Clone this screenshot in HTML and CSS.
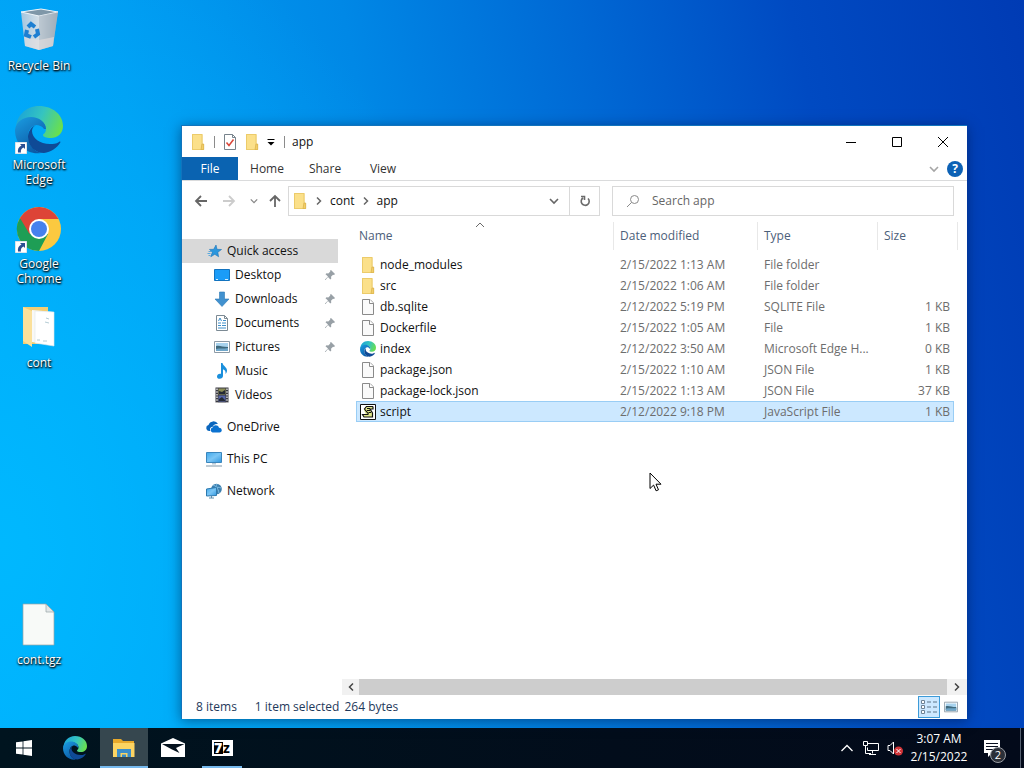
FILE: index.html
```html
<!DOCTYPE html>
<html lang="en">
<head>
    <meta charset="UTF-8">
    <meta name="viewport" content="width=device-width, initial-scale=1.0">
    <title>app</title>
    <link rel="stylesheet" href="styles.css">
</head>
<body>
    <!-- shared icons -->
    <svg class="defs" aria-hidden="true">
        <defs>
            <linearGradient id="edgeTop" x1="0" y1="0.3" x2="1" y2="0.6">
                <stop offset="0" stop-color="#1aa3d8"/>
                <stop offset="0.5" stop-color="#35c4c0"/>
                <stop offset="1" stop-color="#6be04b"/>
            </linearGradient>
            <linearGradient id="edgeLeft" x1="0" y1="0" x2="0.6" y2="1">
                <stop offset="0" stop-color="#1b9de2"/>
                <stop offset="1" stop-color="#0c59a4"/>
            </linearGradient>
            <linearGradient id="screen" x1="0" y1="0" x2="1" y2="1">
                <stop offset="0" stop-color="#3fa9ec"/>
                <stop offset="0.5" stop-color="#7cc6f5"/>
                <stop offset="1" stop-color="#2f97e0"/>
            </linearGradient>
            <linearGradient id="bin" x1="0" y1="0" x2="1" y2="0">
                <stop offset="0" stop-color="#a3c6e0"/>
                <stop offset="0.5" stop-color="#d5dfe6"/>
                <stop offset="1" stop-color="#9fb0bc"/>
            </linearGradient>
        </defs>
        <symbol id="folder" viewBox="0 0 16 16">
            <path d="M2 0h10.500v10H14v6H2z" fill="#f6d46e"/>
            <path d="M2.500.5h9.500v15H2.500z" fill="#fbe08a" stroke="#e8c766" stroke-width=".8"/>
            <path d="M12 10h1.700v5.600H11z" fill="#f3cf69" stroke="#d9b04a" stroke-width=".7"/>
        </symbol>
        <symbol id="page" viewBox="0 0 16 16">
            <path d="M2.500.5h7.500l3.500 3.500v11.500h-11z" fill="#fafafa" stroke="#8a8a8a"/>
            <path d="M9.500.5v4h4" fill="#fff" stroke="#8a8a8a"/>
        </symbol>
        <symbol id="edge" viewBox="0 0 48 48">
            <path d="M1 25C0 10 11 0 24 0c14 0 24 9 24 20 0 8-6 12-12 12-5 0-8-1-8-3 0-1 3-2 3-6 0-6-6-10-13-10C9 13 2 18 1 25z" fill="url(#edgeTop)"/>
            <path d="M0 24c1-8 8-13 16-13 8 0 15 5 15 12h-2c-2-3-5-4-8-4-5 1-8 6-8 11 0 8 5 15 13 17C12 49 0 39 0 24z" fill="url(#edgeLeft)"/>
            <path d="M21 19c-5 2-8 7-8 12 0 9 7 16 16 16 7-1 13-5 16-10 1-1 0-2-1-1-3 2-6 2-9 2-10 0-18-6-18-13 0-3 2-5 4-6z" fill="#0f4a96"/>
        </symbol>
        <symbol id="shortcut" viewBox="0 0 12 12">
            <path d="M0 0h12v12H0z" fill="#fff" stroke="#b7c7d8"/>
            <path d="M5 2h5v5L8.500 5.500C6 7 5.500 8 6 10.500H3C2.500 7 3.500 5 6.500 3.500z" fill="#2b4f92"/>
        </symbol>
        <symbol id="pin" viewBox="0 0 12 12">
            <path d="M7 1l4 4-1 1-1-.3-2 2 .3 1.800-1 1-2.300-2.500L1.500 11H1v-.5L4 7.500 1.500 5.200l1-1 1.800.3 2-2L6 1.800z" fill="#98a0a6"/>
        </symbol>
        <symbol id="picture" viewBox="0 0 16 16">
            <path d="M.5 2.500h15v11H.5z" fill="#fff" stroke="#8c9aa6"/>
            <path d="M2 4h12v8H2z" fill="#a8d3ee"/>
            <path d="M2 7c4-1 6 1 12 1v4H2z" fill="#3f6a7e"/>
            <path d="M2 10c4-1 7 0 12-1v3H2z" fill="#6fa6c9"/>
        </symbol>
        <symbol id="down" viewBox="0 0 10 10">
            <path d="M1 3l4 4 4-4" fill="none" stroke="currentColor" stroke-width="1.600"/>
        </symbol>
        <symbol id="right" viewBox="0 0 10 10">
            <path d="M3 1.500L6.500 5 3 8.500" fill="none" stroke="currentColor" stroke-width="1.500"/>
        </symbol>
        <symbol id="arrow" viewBox="0 0 14 14">
            <path d="M13 7H2M7 2L2 7l5 5" fill="none" stroke="currentColor" stroke-width="1.800"/>
        </symbol>
    </svg>

    <main class="desktop">
        <div class="shortcuts">
            <a class="shortcut" href="#">
                <svg class="shortcut-icon" viewBox="0 0 48 48">
                    <path d="M6 5l20-3 17 3-5 34-14 4-14-4z" fill="url(#bin)"/>
                    <path d="M6 5l18 4 19-4-17-3z" fill="#7f97a8" stroke="#eef5fa"/>
                    <path d="M24 9v34l14-4 5-34z" fill="#9eabb7" opacity=".45"/>
                    <path d="M9 30l15 3 15-3-1 9-14 4-14-4z" fill="#e6dfdf" opacity=".6"/>
                    <g fill="none" stroke="#1d7fd2" stroke-width="4">
                        <path d="M13 20l3-3 4 3"/>
                        <path d="M22 22l1 5-4 3"/>
                        <path d="M16 30l-5-2 1-5"/>
                    </g>
                </svg>
                <span>Recycle Bin</span>
            </a>
            <a class="shortcut" href="#">
                <span class="linked">
                    <svg class="shortcut-icon"><use href="#edge"/></svg>
                    <svg class="link-mark"><use href="#shortcut"/></svg>
                </span>
                <span>Microsoft Edge</span>
            </a>
            <a class="shortcut" href="#">
                <span class="linked">
                    <svg class="shortcut-icon" viewBox="0 0 48 48">
                        <circle cx="24" cy="24" r="22" fill="#fbc940"/>
                        <path d="M24 24L4.900 13A22 22 0 0 0 24 46l9-17z" fill="#1e9e55"/>
                        <path d="M24 14h19.600A22 22 0 0 0 5 13l9.500 16z" fill="#dd4437"/>
                        <circle cx="24" cy="24" r="10" fill="#fff"/>
                        <circle cx="24" cy="24" r="8" fill="#4681ee"/>
                    </svg>
                    <svg class="link-mark"><use href="#shortcut"/></svg>
                </span>
                <span>Google Chrome</span>
            </a>
            <a class="shortcut" href="#">
                <svg class="shortcut-icon" viewBox="0 0 48 48">
                    <path d="M8 3h25v37H8z" fill="#f2cd74"/>
                    <path d="M17 6l21 2v33l-21-3z" fill="#f9f9f7"/>
                    <path d="M20 7l19 1v34l-19-3z" fill="#fff" stroke="#dfe6e8" stroke-width=".6"/>
                    <path d="M8 3l9 4v36l-9-6z" fill="#fbe09a"/>
                    <path d="M31 14l3 1M30 18l4 1M22 36h3M28 37h4" stroke="#b5ccd4"/>
                </svg>
                <span>cont</span>
            </a>
            <a class="shortcut archive" href="#">
                <svg class="shortcut-icon" viewBox="0 0 48 48">
                    <path d="M8 3h23l8 8v33H8z" fill="#f8faf8" stroke="#98a3a6" stroke-width=".7"/>
                    <path d="M31 3v8h8z" fill="#e2e7e8" stroke="#98a3a6" stroke-width=".7"/>
                </svg>
                <span>cont.tgz</span>
            </a>
        </div>

        <section class="window">
            <header class="titlebar">
                <svg class="icon"><use href="#folder"/></svg>
                <span class="divider"></span>
                <button class="plain" type="button" aria-label="Properties">
                    <svg class="icon" viewBox="0 0 16 16">
                        <path d="M2.500.5h8l3 3v12h-11z" fill="#fff" stroke="#77838c"/>
                        <path d="M10.500.5v3h3" fill="none" stroke="#77838c"/>
                        <path d="M4.500 8.500l2.500 3 4.500-6" fill="none" stroke="#d9473a" stroke-width="1.500"/>
                    </svg>
                </button>
                <button class="plain" type="button" aria-label="New folder"><svg class="icon"><use href="#folder"/></svg></button>
                <button class="plain" type="button" aria-label="Customize toolbar">
                    <svg class="icon-small" viewBox="0 0 10 10"><path d="M1.500 2.500h7" stroke="#000"/><path d="M1.500 5h7L5 8.500z"/></svg>
                </button>
                <span class="divider"></span>
                <h1>app</h1>
                <div class="controls">
                    <button type="button" aria-label="Minimize"><svg viewBox="0 0 12 12"><path d="M1 6.500h10"/></svg></button>
                    <button type="button" aria-label="Maximize"><svg viewBox="0 0 12 12"><path d="M1.500 1.500h9v9h-9z"/></svg></button>
                    <button type="button" aria-label="Close"><svg viewBox="0 0 12 12"><path d="M1 1l10 10M11 1L1 11"/></svg></button>
                </div>
            </header>

            <nav class="ribbon">
                <button class="file-tab" type="button">File</button>
                <button type="button">Home</button>
                <button type="button">Share</button>
                <button type="button">View</button>
                <div class="ribbon-end">
                    <svg class="icon-small muted"><use href="#down"/></svg>
                    <button class="help" type="button" aria-label="Help">?</button>
                </div>
            </nav>

            <div class="address-row">
                <div class="history">
                    <button class="plain" type="button" aria-label="Back"><svg class="icon-nav"><use href="#arrow"/></svg></button>
                    <button class="plain off" type="button" aria-label="Forward"><svg class="icon-nav forward"><use href="#arrow"/></svg></button>
                    <button class="plain recent" type="button" aria-label="Recent locations"><svg class="icon-tiny"><use href="#down"/></svg></button>
                    <button class="plain" type="button" aria-label="Up"><svg class="icon-nav up"><use href="#arrow"/></svg></button>
                </div>
                <div class="address">
                    <svg class="icon"><use href="#folder"/></svg>
                    <svg class="icon-small"><use href="#right"/></svg>
                    <a href="#">cont</a>
                    <svg class="icon-small"><use href="#right"/></svg>
                    <a href="#">app</a>
                    <button class="plain previous" type="button" aria-label="Previous locations"><svg class="icon-small"><use href="#down"/></svg></button>
                    <button class="refresh" type="button" aria-label="Refresh">
                        <svg class="icon-nav" viewBox="0 0 14 14"><path d="M5 4a4 4 0 1 0 5 .5M3 2.500h3.500V6" fill="none" stroke="#6b6b6b" stroke-width="1.600"/></svg>
                    </button>
                </div>
                <label class="search">
                    <svg class="icon-nav" viewBox="0 0 14 14"><circle cx="8.500" cy="5.500" r="4" fill="none" stroke="#8a8a8a"/><path d="M5.500 8.500L1 13" stroke="#8a8a8a"/></svg>
                    <input type="text" placeholder="Search app" aria-label="Search app">
                </label>
            </div>

            <div class="content">
                <nav class="tree">
                    <a class="active" href="#">
                        <svg class="icon" viewBox="0 0 16 16"><path d="M10 2l1 4.300 4.500.2-3.700 2.800.8 4.400-3.800-2.400-4 2.400 1.500-4.400L3.500 6.400l4.200-.1z" fill="#2c97dd" stroke="#1b74b8" stroke-width=".6"/><path d="M2.500 8.500h3M1.500 10.500h3M2.500 12.500h2" stroke="#5aa9dd"/></svg>
                        Quick access
                    </a>
                    <a class="child" href="#">
                        <svg class="icon" viewBox="0 0 16 16"><path d="M.5 2.500h15v11H.5z" fill="#1a9cf8" stroke="#1273bf"/><path d="M2 12.500h2M11 12.500h3" stroke="#d7efff"/></svg>
                        Desktop
                        <svg class="pin"><use href="#pin"/></svg>
                    </a>
                    <a class="child" href="#">
                        <svg class="icon" viewBox="0 0 16 16"><path d="M5.500 1h5v7h4.500L8 15.500 1 8h4.500z" fill="#4191cf" stroke="#2c78b6" stroke-width=".6"/></svg>
                        Downloads
                        <svg class="pin"><use href="#pin"/></svg>
                    </a>
                    <a class="child" href="#">
                        <svg class="icon" viewBox="0 0 16 16"><path d="M2.500.5h8l3 3v12h-11z" fill="#fff" stroke="#7c8a94"/><path d="M10.500.5v3h3" fill="none" stroke="#7c8a94"/><path d="M4.500 6L6 3l1.500 3M9 5.500h3M4 8h3M8 8h4M4 10.500h3M8 10.500h4M4 13h8" fill="none" stroke="#3f8fca"/></svg>
                        Documents
                        <svg class="pin"><use href="#pin"/></svg>
                    </a>
                    <a class="child" href="#">
                        <svg class="icon"><use href="#picture"/></svg>
                        Pictures
                        <svg class="pin"><use href="#pin"/></svg>
                    </a>
                    <a class="child" href="#">
                        <svg class="icon" viewBox="0 0 16 16"><path d="M7 0h1.500c.5 3 4.500 4 4.500 7.500 0 1.500-.6 2.500-1.500 3.500.5-3-.7-4-2.500-4.800V13c0 1.500-1.500 2.800-3.300 2.800S3 15 3 13.500s1.300-2.700 3-2.700H7z" fill="#1a8fdc"/></svg>
                        Music
                    </a>
                    <a class="child" href="#">
                        <svg class="icon" viewBox="0 0 16 16"><path d="M1.500.5h13v15h-13z" fill="#3a3a42"/><path d="M4.500 1.500h7v6h-7z" fill="#8b8d56"/><path d="M4.500 8.500h7v6h-7z" fill="#5564a8"/><path d="M5 4l3 1 3-2v4H5zM5 12l3-2 3 3v1H5z" fill="#252a35"/><path d="M3 1.500v14M13 1.500v14" stroke="#e2e2e2" stroke-width="1.400" stroke-dasharray="1.500 1.200"/></svg>
                        Videos
                    </a>
                    <a class="root" href="#">
                        <svg class="icon" viewBox="0 0 16 16"><path d="M3 12a3 3 0 0 1-.5-5.900A5.200 5.200 0 0 1 12 5C9 4.500 7 6 6.500 8 4 8 3.500 10.500 4.500 12z" fill="#0b66bd"/><path d="M6.500 13.500a2.600 2.600 0 0 1 .2-5C7.500 5.500 12 5.500 13 8.700c3.500 0 3.700 4.800.5 4.800z" fill="#0c72d0"/></svg>
                        OneDrive
                    </a>
                    <a class="root" href="#">
                        <svg class="icon" viewBox="0 0 16 16"><path d="M.5 1.500h15v10H.5z" fill="url(#screen)" stroke="#3b86bd"/><path d="M6 12h4v1.500H6z" fill="#b7c9d6"/><path d="M0 15h16" stroke="#7e97a8"/></svg>
                        This PC
                    </a>
                    <a class="root" href="#">
                        <svg class="icon" viewBox="0 0 16 16"><circle cx="10.500" cy="6" r="5.300" fill="#3d7fae"/><path d="M7 2c3 1 5 3 6 8M11 1c-1 2-1 3 0 5M9 5c2-1 4-1 6 0" fill="none" stroke="#7fbde4"/><path d="M.5 6l10-1.500v8L.5 13z" fill="url(#screen)" stroke="#2d79ae"/><path d="M3 15h5M5.500 13v2" stroke="#5d8dac"/></svg>
                        Network
                    </a>
                </nav>

                <div class="pane">
                    <table class="files">
                        <colgroup>
                            <col>
                            <col class="col-date">
                            <col class="col-type">
                            <col class="col-size">
                        </colgroup>
                        <thead>
                            <tr>
                                <th class="sorted">Name<svg class="sort-mark" viewBox="0 0 10 6"><path d="M1 5l4-4 4 4" fill="none" stroke="#6a6a6a"/></svg></th>
                                <th>Date modified</th>
                                <th>Type</th>
                                <th class="last">Size</th>
                            </tr>
                        </thead>
                        <tbody>
                            <tr><td><span class="name"><svg class="icon"><use href="#folder"/></svg>node_modules</span></td><td>2/15/2022 1:13 AM</td><td>File folder</td><td></td></tr>
                            <tr><td><span class="name"><svg class="icon"><use href="#folder"/></svg>src</span></td><td>2/15/2022 1:06 AM</td><td>File folder</td><td></td></tr>
                            <tr><td><span class="name"><svg class="icon"><use href="#page"/></svg>db.sqlite</span></td><td>2/12/2022 5:19 PM</td><td>SQLITE File</td><td>1 KB</td></tr>
                            <tr><td><span class="name"><svg class="icon"><use href="#page"/></svg>Dockerfile</span></td><td>2/15/2022 1:05 AM</td><td>File</td><td>1 KB</td></tr>
                            <tr><td><span class="name"><svg class="icon"><use href="#edge"/></svg>index</span></td><td>2/12/2022 3:50 AM</td><td>Microsoft Edge H...</td><td>0 KB</td></tr>
                            <tr><td><span class="name"><svg class="icon"><use href="#page"/></svg>package.json</span></td><td>2/15/2022 1:10 AM</td><td>JSON File</td><td>1 KB</td></tr>
                            <tr><td><span class="name"><svg class="icon"><use href="#page"/></svg>package-lock.json</span></td><td>2/15/2022 1:13 AM</td><td>JSON File</td><td>37 KB</td></tr>
                            <tr class="selected"><td><span class="name">
                                <svg class="icon" viewBox="0 0 16 16"><path d="M.5.500h15v15H.5z" fill="#fff" stroke="#111"/><path d="M6 2.500h7v2.500h-3l2.500 4.500v3.500H4l-1.500-2.500H6L4 6z" fill="#dfe58a"/><path d="M13 2.500H6.500L4.500 5l4 5M13 2.500v2.500h-3l2.500 4v4H4l-1.500-2.500h6" fill="none" stroke="#111" stroke-width="1.200"/><path d="M7 4.500h3M7 6.500h3M8.500 8.500h2.500" stroke="#111"/></svg>script</span></td><td>2/12/2022 9:18 PM</td><td>JavaScript File</td><td>1 KB</td></tr>
                        </tbody>
                    </table>
                    <div class="scrollbar">
                        <button type="button" aria-label="Scroll left"><svg class="icon-small flip"><use href="#right"/></svg></button>
                        <span class="thumb"></span>
                        <button class="scroll-end" type="button" aria-label="Scroll right"><svg class="icon-small"><use href="#right"/></svg></button>
                    </div>
                </div>
            </div>

            <footer class="status">
                <span class="count">8 items</span>
                <span>1 item selected</span>
                <span>264 bytes</span>
                <div class="views">
                    <button class="on" type="button" aria-label="Details">
                        <svg class="icon" viewBox="0 0 16 16"><path d="M.5 1.500h3v3h-3zM.5 6.500h3v3h-3zM.5 11.500h3v3h-3z" fill="#fff" stroke="#6d8294"/><path d="M6 3h4M12 3h4M6 8h4M12 8h4M6 13h4M12 13h4" stroke="#5d7488"/></svg>
                    </button>
                    <button type="button" aria-label="Large icons"><svg class="icon-view"><use href="#picture"/></svg></button>
                </div>
            </footer>
        </section>

        <svg class="cursor" viewBox="0 0 13 20"><path d="M1 1v15.500l3.600-3.400 2.500 5.700 2.400-1-2.500-5.600h5z" fill="#fff" stroke="#000"/></svg>
    </main>

    <footer class="taskbar">
        <button type="button" aria-label="Start">
            <svg class="icon" viewBox="0 0 16 16"><path d="M0 2.300l6.600-.9v6.100H0zM7.400 1.300L16 0v7.500H7.400zM0 8.400h6.600v6.200L0 13.700zM7.400 8.400H16V16l-8.600-1.300z" fill="#fff"/></svg>
        </button>
        <button type="button" aria-label="Microsoft Edge"><svg class="app-icon"><use href="#edge"/></svg></button>
        <button class="current" type="button" aria-label="File Explorer">
            <svg class="app-icon" viewBox="0 0 24 24"><path d="M1 3h8l2 2h11v16H1z" fill="#e8a92b"/><path d="M1 7h21.500v14H1z" fill="#fcd462"/><path d="M5 13h14v8h-3.500v-4h-7v4H5z" fill="#3c8ec9"/><path d="M10 18.500h4V21h-4z" fill="#3c8ec9"/></svg>
        </button>
        <button type="button" aria-label="Mail">
            <svg class="app-icon" viewBox="0 0 24 24"><path d="M0 7.500L12 2l12 5.500V21H0z" fill="#fff"/><path d="M1 8h22.500L15 12l3.500 5L11 13.500z" fill="#04121e"/></svg>
        </button>
        <button class="running" type="button" aria-label="7-Zip"><span class="seven-zip"><b>7</b><i>z</i></span></button>

        <div class="tray">
            <button type="button" aria-label="Hidden icons"><svg class="tray-icon" viewBox="0 0 16 16"><path d="M2.500 11L8 5.500l5.500 5.500" stroke-width="1.300"/></svg></button>
            <button type="button" aria-label="Network"><svg class="tray-icon" viewBox="0 0 16 16"><path d="M5 3.500h10.500v7H4.500v-3M.5 1.500h4v4h-4zM2.500 5.500v8H8M9.500 10.500v3M6 14.500h7"/></svg></button>
            <button type="button" aria-label="Volume">
                <svg class="tray-icon" viewBox="0 0 16 16"><path d="M1 5.500h2l3.500-3.500v12L3 10.500H1z"/><circle class="badge-red" cx="11.500" cy="11" r="4.500"/><path d="M9.500 9l4 4M13.500 9l-4 4"/></svg>
            </button>
            <button class="clock" type="button"><span>3:07 AM</span><span>2/15/2022</span></button>
            <button class="notices" type="button" aria-label="Notifications">
                <svg class="notice-icon" viewBox="0 0 18 18"><path d="M1 1h16v13H9l-4 4v-4H1z" fill="#fff"/><path d="M3 4.500h12M3 7.500h12M3 10.500h7" stroke="#0a1020"/></svg>
                <span class="badge">2</span>
            </button>
            <button class="peek" type="button" aria-label="Show desktop"></button>
        </div>
    </footer>
</body>
</html>
```

FILE: styles.css
```css
* {
    box-sizing: border-box;
}
body {
    margin: 0;
    min-height: 100vh;
    display: flex;
    flex-direction: column;
    font-family: "Open Sans", "Noto Sans", sans-serif;
    font-size: 12px;
    line-height: 16px;
    color: #111;
}
button, input {
    font: inherit;
    color: inherit;
    padding: 0;
    border: none;
    background: none;
}
a {
    color: inherit;
    text-decoration: none;
}
svg {
    display: block;
    flex: none;
}
.defs {
    position: absolute;
    width: 0;
    height: 0;
}
.icon {
    width: 16px;
    height: 16px;
}
.icon-nav {
    width: 14px;
    height: 14px;
}
.icon-small {
    width: 10px;
    height: 10px;
}
.icon-tiny {
    width: 8px;
    height: 8px;
}
.icon-view {
    width: 14px;
    height: 14px;
}
.plain {
    display: flex;
    align-items: center;
}

/* desktop */
.desktop {
    flex: 1;
    position: relative;
    background:
        radial-gradient(ellipse 50% 90% at 0% 75%, rgba(0, 186, 255, 0.9), rgba(0, 170, 255, 0) 100%),
        linear-gradient(78deg, #00a8fb 0%, #009cf2 22%, #0088e6 42%, #0068d4 62%, #004ac2 80%, #003bb4 100%);
}
.shortcuts {
    display: grid;
    grid-template-columns: 78px;
    grid-auto-rows: 99px;
}
.shortcut {
    display: flex;
    flex-direction: column;
    align-items: center;
    gap: 3px;
    padding-top: 7px;
    line-height: 15px;
    text-align: center;
    color: #fff;
    text-shadow: 1px 1px 2px #000, 0 1px 2px #000;
}
.shortcut-icon {
    width: 48px;
    height: 48px;
}
.archive {
    grid-row: 7;
}
.linked {
    position: relative;
}
.link-mark {
    position: absolute;
    left: 0;
    bottom: 0;
    width: 12px;
    height: 12px;
}

/* explorer window */
.window {
    position: absolute;
    top: 125px;
    right: 57px;
    bottom: 9px;
    left: 181px;
    display: flex;
    flex-direction: column;
    background: #fff;
    border: 1px solid #1274bd;
    border-width: 1px 0 0 1px;
    box-shadow: 0 2px 12px rgba(0, 20, 60, 0.5);
}
.titlebar {
    display: flex;
    align-items: center;
    gap: 6px;
    height: 31px;
    padding-left: 8px;
}
.titlebar h1 {
    margin: 0;
    font-size: 12px;
    font-weight: normal;
}
.divider {
    width: 1px;
    height: 12px;
    margin: 0 1px 0 2px;
    background: #8b8b8b;
}
.controls {
    display: flex;
    margin-left: auto;
    padding-right: 1px;
    height: 31px;
}
.controls button {
    width: 46px;
    display: flex;
    align-items: center;
    justify-content: center;
}
.controls svg {
    width: 12px;
    height: 12px;
    fill: none;
    stroke: #000;
}
.ribbon {
    display: flex;
    height: 24px;
    border-bottom: 1px solid #dadbdc;
    color: #333;
}
.ribbon > button {
    width: 58px;
}
.ribbon > .file-tab {
    width: 56px;
    color: #fff;
    background: #0a63b1;
}
.ribbon-end {
    display: flex;
    align-items: center;
    gap: 8px;
    margin-left: auto;
    padding-right: 4px;
}
.muted {
    color: #a5a5a5;
}
.help {
    width: 16px;
    height: 16px;
    border-radius: 50%;
    font-weight: bold;
    color: #fff;
    background: #0c61b5;
}
.address-row {
    display: flex;
    align-items: center;
    height: 40px;
    padding-right: 13px;
}
.history {
    display: flex;
    align-items: center;
    gap: 14px;
    width: 106px;
    padding-left: 12px;
    color: #666;
}
.history .off {
    color: #ccc;
}
.history .recent {
    color: #888;
    margin-right: -4px;
}
.forward {
    transform: rotate(180deg);
}
.up {
    transform: rotate(90deg);
}
.address {
    flex: 307;
    display: flex;
    align-items: center;
    gap: 6px;
    height: 30px;
    padding-left: 3px;
    border: 1px solid #d9d9d9;
}
.address svg {
    color: #666;
}
.previous {
    margin-left: auto;
    padding: 0 4px;
}
.refresh {
    display: flex;
    align-items: center;
    justify-content: center;
    width: 30px;
    height: 28px;
    border-left: 1px solid #d9d9d9;
}
.search {
    flex: 314;
    display: flex;
    align-items: center;
    gap: 12px;
    height: 30px;
    margin-left: 12px;
    padding: 0 13px;
    border: 1px solid #d9d9d9;
}
.search input {
    flex: 1;
    min-width: 0;
    outline: none;
}
.search input::placeholder {
    color: #666;
    opacity: 1;
}

/* navigation tree and file list */
.content {
    flex: 1;
    display: flex;
}
.tree {
    width: 160px;
    padding: 18px 4px 0 0;
}
.tree a {
    display: flex;
    align-items: center;
    gap: 5px;
    height: 24px;
    padding: 0 2px 0 24px;
}
.tree .child {
    padding-left: 32px;
}
.tree .root {
    margin-top: 8px;
}
.tree .active {
    background: #d9d9d9;
}
.pin {
    width: 12px;
    height: 12px;
    margin-left: auto;
}
.pane {
    flex: 1;
    display: flex;
    flex-direction: column;
    justify-content: space-between;
}
.files {
    width: auto;
    margin: 1px 13px 0 14px;
    table-layout: fixed;
    border-collapse: separate;
    border-spacing: 0;
    color: #6d6d6d;
}
.col-date {
    width: 144px;
}
.col-type {
    width: 120px;
}
.col-size {
    width: 77px;
}
.files th {
    position: relative;
    height: 28px;
    padding: 0 6px;
    border-left: 1px solid #e8e8e8;
    font-weight: normal;
    text-align: left;
    color: #4c607a;
}
.files th.sorted {
    padding-left: 3px;
    border-left: none;
}
.files th.last::after {
    content: "";
    position: absolute;
    top: 0;
    right: -4px;
    bottom: 0;
    border-right: 1px solid #e8e8e8;
}
.sort-mark {
    position: absolute;
    top: 0;
    right: 50%;
    width: 10px;
    height: 6px;
}
.files tbody::before {
    content: "";
    display: block;
    height: 4px;
}
.files td {
    height: 21px;
    padding: 0 7px;
    white-space: nowrap;
}
.files td:first-child {
    padding-left: 4px;
}
.files td:last-child {
    padding-right: 4px;
    text-align: right;
}
.name {
    display: flex;
    align-items: center;
    gap: 4px;
    color: #111;
}
.selected td {
    background: #cce8ff;
    border-top: 1px solid #99cdf5;
    border-bottom: 1px solid #99cdf5;
}
.selected td:first-child {
    padding-left: 3px;
    border-left: 1px solid #99cdf5;
}
.selected td:last-child {
    padding-right: 3px;
    border-right: 1px solid #99cdf5;
}
.scrollbar {
    display: flex;
    height: 16px;
    background: #f1f1f1;
}
.scrollbar button {
    display: flex;
    align-items: center;
    justify-content: center;
    width: 17px;
    color: #444;
}
.scrollbar .scroll-end {
    width: 20px;
}
.thumb {
    flex: 1;
    background: #cdcdcd;
}
.flip {
    transform: rotate(180deg);
}
.status {
    display: flex;
    align-items: center;
    gap: 5px;
    height: 24px;
    padding-left: 14px;
    color: #1e395b;
}
.count {
    margin-right: 13px;
}
.views {
    display: flex;
    margin-left: auto;
    padding-right: 5px;
}
.views button {
    display: flex;
    align-items: center;
    justify-content: center;
    width: 22px;
    height: 22px;
}
.views .on {
    background: #cce8ff;
    border: 1px solid #3d9bd8;
}
.cursor {
    position: absolute;
    top: 472px;
    left: 649px;
    width: 13px;
    height: 20px;
}

/* taskbar */
.taskbar {
    display: flex;
    gap: 1px;
    height: 40px;
    color: #fff;
    background: linear-gradient(90deg, #00141f, #020d1b 60%, #030a1a);
}
.taskbar button {
    display: flex;
    align-items: center;
    justify-content: center;
}
.taskbar > button {
    width: 48px;
    border-bottom: 2px solid transparent;
    border-top: 2px solid transparent;
}
.taskbar > button:first-child {
    margin-right: 2px;
}
.taskbar > .current {
    background: #36474f;
    border-top-color: #36474f;
    border-bottom-color: #76b9ed;
}
.taskbar > .running {
    width: 40px;
    margin-left: 4px;
    border-bottom-color: #76b9ed;
}
.app-icon {
    width: 24px;
    height: 24px;
}
.seven-zip {
    display: flex;
    width: 21px;
    height: 16px;
    border: 2px solid #fff;
    font-size: 14px;
    line-height: 12px;
    font-weight: bold;
}
.seven-zip b {
    width: 9px;
    background: #000;
}
.seven-zip i {
    width: 8px;
    font-style: normal;
    color: #000;
    background: #fff;
}
.tray {
    display: flex;
    margin-left: auto;
}
.tray button {
    width: 24px;
}
.tray-icon {
    width: 16px;
    height: 16px;
    fill: none;
    stroke: #fff;
}
.badge-red {
    fill: #d13438;
    stroke: none;
}
.tray .clock {
    flex-direction: column;
    width: 64px;
    line-height: 18px;
}
.tray .notices {
    position: relative;
    width: 49px;
}
.notice-icon {
    width: 18px;
    height: 18px;
    margin-right: 8px;
}
.badge {
    position: absolute;
    right: 14px;
    bottom: 5px;
    width: 16px;
    height: 16px;
    border: 1px solid #9a9da3;
    border-radius: 50%;
    font-size: 11px;
    line-height: 14px;
    background: #2b2f38;
}
.tray .peek {
    width: 4px;
    border-left: 1px solid #566070;
}
```
